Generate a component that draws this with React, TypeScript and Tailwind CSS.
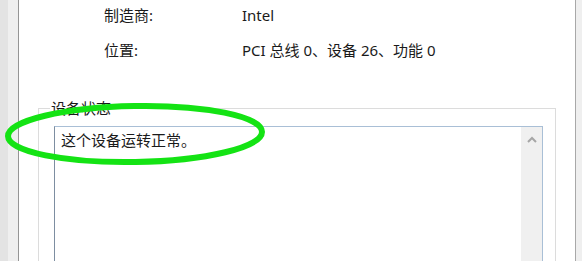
const font = { fontFamily: '"Noto Sans", "Noto Sans CJK SC", sans-serif' }

function InfoRow({ label, value }: { label: string; value: string }) {
  return (
    <div className="flex h-5 items-center text-[15px] leading-5 text-[#1a1a1a]">
      <div className="w-[138px] pl-[85px] box-content shrink-0">{label}</div>
      <div className="whitespace-nowrap">{value}</div>
    </div>
  )
}

export default function App() {
  return (
    <div className="relative w-[582px] h-[261px] bg-[#f0f0f0] flex overflow-hidden" style={font}>
      {/* 对话框边 */}
      <div className="w-[8px] shrink-0 bg-[#e3e3e3]" />
      <div className="w-[10px] shrink-0 bg-[#efefef]" />

      {/* 属性页 */}
      <div className="flex-1 bg-white border-l border-l-[#959595] border-r border-r-[#a8a8a8] flex flex-col">
        <div className="pt-[5px] flex flex-col gap-[15px]">
          <InfoRow label="制造商:" value="Intel" />
          <InfoRow label="位置:" value="PCI 总线 0、设备 26、功能 0" />
        </div>

        {/* 设备状态 */}
        <fieldset className="mt-[38px] mx-[19px] border border-[#dcdcdc] h-[200px] shrink-0">
          <legend className="ml-[11px] px-px text-[15px] leading-5 text-[#1a1a1a]">设备状态</legend>
          <div className="ml-[15px] mr-[12px] mt-[8px] h-[150px] flex border border-[#a9bfd6] border-l-[#7d8ea1] bg-white">
            <div className="flex-1 pl-[6px] pt-[3px] text-[15px] leading-5 text-[#1a1a1a]">
              这个设备运转正常。
            </div>
            <div className="w-[21px] shrink-0 bg-[#f0f0f0] flex justify-center pt-[9px]">
              <svg width="10" height="7" viewBox="0 0 10 7">
                <path d="M1 6 L5 2 L9 6" fill="none" stroke="#a6a6a6" strokeWidth="2" />
              </svg>
            </div>
          </div>
        </fieldset>
      </div>

      <div className="w-[6px] shrink-0 bg-[#efefef]" />

      {/* 绿色标注圈 */}
      <svg className="absolute left-0 top-0 pointer-events-none" width="582" height="261">
        <ellipse
          cx="135"
          cy="134"
          rx="127"
          ry="28"
          fill="none"
          stroke="#14e314"
          strokeWidth="6"
          transform="rotate(-1 135 134)"
        />
      </svg>
    </div>
  )
}
